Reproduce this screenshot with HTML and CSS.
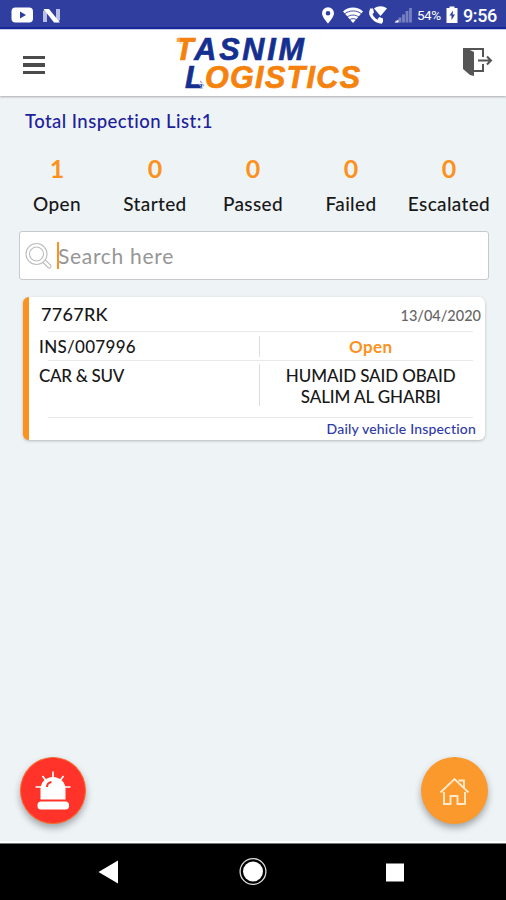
FILE: index.html
```html
<!DOCTYPE html>
<html lang="en">
<head>
<meta charset="utf-8">
<title>Tasnim Logistics</title>
<link rel="stylesheet" href="styles.css">
</head>
<body>
<div class="statusbar">
  <svg class="status-icons" width="70" height="28" viewBox="0 0 70 28">
    <rect x="11.5" y="7.5" width="21.5" height="15" rx="4" fill="#fff"/>
    <path d="M20 11.5v7l6-3.500z" fill="#303f9f"/>
    <path d="M43 22V11l4-2v13zM60 9v11l-4 2.500V9z" fill="#b9bfe2"/>
    <path d="M43.500 9h5.500L60 22.500h-6z" fill="#fff"/>
  </svg>
  <div class="status-right">
    <svg width="94" height="28" viewBox="0 0 94 28">
      <path fill="#fff" fill-rule="evenodd" d="M8 7.300a6 6 0 0 1 6 6c0 4-6 10.200-6 10.200S2 17.300 2 13.300a6 6 0 0 1 6-6zm0 3.700a2.300 2.300 0 1 0 0 4.600 2.300 2.300 0 0 0 0-4.600z"/>
      <path d="M33 23 23 11.500C28 6 38 6 43 11.500z" fill="#fff"/>
      <path d="M24 14.300c5-4.500 13-4.500 18 0M26.700 17.300c4-3 8.600-3 12.600 0M29 20c2.500-1.800 5.500-1.800 8 0" fill="none" stroke="#303f9f" stroke-width=".9"/>
      <path d="M54 8.500c4-3 9-3 13 0L60.500 16z" fill="#fff"/>
      <path d="M51.500 9.500c-3 5 3 12.500 10.500 12.800" fill="none" stroke="#fff" stroke-width="3"/>
      <path d="M50 8.500l3 0 1 4-2 2zM57.500 19l2-2 3.500 1.500v4h-4z" fill="#fff"/>
      <path d="M76.500 22.500v-2M80 22.500v-5M83.500 22.500v-8M87 22.500V11M90.500 22.500V8" stroke="#7680c0" stroke-width="2.800"/>
      <path d="M74.500 22.500h4v-3z" fill="#fff"/>
    </svg>
    <span class="battery-text">54%</span>
    <svg width="12" height="28" viewBox="0 0 12 28"><path d="M.5 8h3V6.500h5V8h3v15H.5z" fill="#fff"/><path d="M7 10.500 3.500 15.500h2V20L9 14.500H6.700z" fill="#303f9f"/></svg>
    <span class="clock">9:56</span>
  </div>
</div>

<header class="header">
  <div class="menu"><i></i><i></i><i></i></div>
  <svg class="logo" width="190" height="62" viewBox="0 0 190 62">
    <text class="logo-text" x="3" y="29" textLength="129" lengthAdjust="spacing"><tspan class="orange">T</tspan><tspan class="blue">ASNIM</tspan></text>
    <text class="logo-text" x="13" y="56.500" textLength="175" lengthAdjust="spacing"><tspan class="blue">L</tspan><tspan class="orange">OGISTICS</tspan></text>
    <path d="M4 8h4M5 10h3M7 12h3" stroke="#f9c48e" stroke-width="1"/>
    <path d="M28 50l2 2M27 53l2 2M30 53l2 2M28 57h3" stroke="#9ba7d1" stroke-width="1.100"/>
  </svg>
  <svg class="exit" width="32" height="32" viewBox="0 0 32 32">
    <path d="M1 2h3l8 4v24l-4-1-7-6z" fill="#555"/>
    <path d="M2 3h19v8M12 25h9v-7" fill="none" stroke="#555" stroke-width="2"/>
    <path d="M16 14.500h12M25 10.500l4 4-4 4" fill="none" stroke="#555" stroke-width="2"/>
  </svg>
</header>

<main class="content">
  <h1 class="title">Total Inspection List:1</h1>
  <div class="stats">
    <div class="stat"><b>1</b><span>Open</span></div>
    <div class="stat"><b>0</b><span>Started</span></div>
    <div class="stat"><b>0</b><span>Passed</span></div>
    <div class="stat"><b>0</b><span>Failed</span></div>
    <div class="stat"><b>0</b><span>Escalated</span></div>
  </div>
  <div class="search">
    <svg width="28" height="30" viewBox="0 0 28 30" fill="none" stroke="#bdbdbd" stroke-width="1.100">
      <circle cx="11.500" cy="13" r="10.500"/><circle cx="11.500" cy="13" r="7"/>
      <path d="M18 21.500l5 5c2 1.500 4-.5 2.500-2.500l-5.300-5.200"/>
    </svg>
    <span class="caret"></span><span class="placeholder">Search here</span>
  </div>
  <article class="card">
    <div class="row row-top"><span class="plate">7767RK</span><span class="date">13/04/2020</span></div>
    <div class="row row-mid"><span class="left inspection">INS/007996</span><span class="right open">Open</span></div>
    <div class="row row-body"><span class="left vehicle">CAR &amp; SUV</span><span class="right driver"><span>HUMAID SAID OBAID</span><span>SALIM AL GHARBI</span></span></div>
    <div class="row row-foot"><span class="type">Daily vehicle Inspection</span></div>
  </article>
  <div class="actions">
    <div class="fab red">
      <svg width="38" height="42" viewBox="0 0 38 42">
        <path d="M6.500 29.500V19a12.500 12 0 0 1 25 0v10.500z" fill="#fff"/>
        <rect x="3.500" y="31.500" width="31.500" height="8" rx="3.500" fill="#fff"/>
        <path d="M19 1.500V8M8.500 6l3 4M29.500 6l-3 4M1.500 17H8M30 17h6.500" stroke="#fff" stroke-width="1.700"/>
        <path d="M13 17c0-3 2-4.500 4.500-5" fill="none" stroke="#ff3329" stroke-width="2"/>
      </svg>
    </div>
    <div class="fab amber">
      <svg width="32" height="32" viewBox="0 0 32 32" fill="none" stroke="#ffe9c9" stroke-width="1.900">
        <path d="M1.500 17.500 15.500 4l14 13.500M19.500 5.500h5.500v7M5 17v12h6.500v-8h7v8h7.500V17"/>
      </svg>
    </div>
  </div>
</main>
<nav class="navbar">
  <svg width="506" height="56" viewBox="0 0 506 56">
    <path d="M98.500 28 118 16.500v23z" fill="#fff"/>
    <circle cx="253" cy="27.500" r="12.900" fill="none" stroke="#ddd" stroke-width="1.300"/>
    <circle cx="253" cy="27.500" r="10" fill="#fff"/>
    <rect x="386" y="19.500" width="18" height="18" fill="#fff"/>
  </svg>
</nav>
</body>
</html>
```
FILE: styles.css
```css
* { box-sizing: border-box; }
body { margin: 0; width: 506px; height: 900px; overflow: hidden; background: #eef3f6; font-family: Lato, "Liberation Sans", sans-serif; font-weight: 500; color: #181818; display: flex; flex-direction: column; }
svg { display: block; flex: none; }
span, h1, text { white-space: nowrap; }

.statusbar { height: 30px; flex: none; background: #303f9f; border-bottom: 1px solid #c9cfed; box-shadow: inset 0 -2px 0 #17299a; display: flex; justify-content: space-between; color: #fff; font-family: Roboto, sans-serif; }
.status-right { display: flex; width: 186px; height: 29px; }
.battery-text { width: 32px; padding-left: 3px; font-size: 13.500px; line-height: 31px; letter-spacing: -.5px; font-weight: 400; }
.clock { font-size: 18px; line-height: 32px; padding-left: 5px; letter-spacing: -.4px; }

.header { height: 66px; flex: none; background: #fff; display: flex; box-shadow: 0 1px 2px #aaa; position: relative; }
.menu { width: 22px; margin: 26px 0 0 23px; display: flex; flex-direction: column; gap: 4px; }
.menu i { height: 3.300px; background: #4b4b4b; }
.logo { margin-left: 127px; margin-top: 1px; }
.logo-text { font: italic 700 30.500px/1 "Liberation Sans", sans-serif; }
.orange { fill: #f5820d; stroke: #f5820d; stroke-width: .7px; }
.blue { fill: #152f91; stroke: #152f91; stroke-width: .7px; }
.exit { margin: 16px 0 0 100px; }

.content { flex: 1; min-height: 0; display: flex; flex-direction: column; }
.title { margin: 12px 0 0 25px; height: 26px; font-size: 18.500px; line-height: 26px; font-weight: 500; color: #20209b; letter-spacing: .45px; }
.stats { display: grid; grid-template-columns: repeat(5, 98px); margin: 18px 0 0 8px; height: 65px; }
.stat { display: flex; flex-direction: column; align-items: center; }
.stat b { font-size: 25px; line-height: 32px; height: 32px; font-weight: 700; color: #fb9220; }
.stat span { font-size: 19px; line-height: 24px; margin-top: 8px; letter-spacing: .35px; }

.search { width: 470px; height: 49px; margin: 14px 0 0 19px; background: #fff; border: 1px solid #c6c9cd; border-radius: 3px; display: flex; align-items: center; padding-left: 5px; }
.caret { width: 2px; height: 27px; margin-left: 4px; background: #fb9220; }
.placeholder { margin-left: -1px; font-size: 21px; line-height: 28px; font-weight: 400; color: #969696; letter-spacing: .7px; }

.card { width: 462px; height: 143px; flex: none; margin: 17px 0 0 23px; background: #fff; border-left: 6px solid #fb9220; border-radius: 6px; box-shadow: 0 1px 3px #b5b9bd; }
.row { display: flex; margin: 0 12px 0 19px; }
.row-top { height: 35px; border-bottom: 1px solid #e9e9e9; justify-content: space-between; }
.row-mid { height: 29px; padding-top: 4px; border-bottom: 1px solid #e9e9e9; }
.row-body { height: 57px; padding-top: 3px; border-bottom: 1px solid #e9e9e9; }
.row-foot { height: 22px; justify-content: flex-end; }
.plate { margin-left: -7px; font-size: 18px; line-height: 35px; letter-spacing: .3px; }
.date { margin-right: -8px; font-size: 14.500px; line-height: 38px; color: #666; letter-spacing: 0; }
.left { width: 221px; margin-left: -9px; font-size: 17px; }
.right { width: 214px; border-left: 1px solid #ddd; text-align: center; font-size: 17px; padding-left: 8px; }
.inspection { line-height: 22px; letter-spacing: .3px; }
.open { color: #fb9220; height: 21px; line-height: 22px; font-weight: 700; letter-spacing: .4px; }
.vehicle { line-height: 24px; letter-spacing: -.3px; }
.driver { height: 42px; display: flex; flex-direction: column; align-items: center; line-height: 20.500px; padding-top: 2px; letter-spacing: -.1px; }
.type { margin-right: -3px; font-size: 14px; line-height: 22px; color: #2e3ba5; letter-spacing: .18px; }

.actions { margin: auto 18px 19px 20px; display: flex; justify-content: space-between; }
.fab { width: 66px; height: 67px; border-radius: 50%; display: flex; align-items: center; justify-content: center; box-shadow: 0 4px 7px #9fa5aa; }
.red { background: #ff3329; border: 1px solid #f96a2c; }
.amber { width: 67px; background: #fc992d; }
.navbar { height: 57px; flex: none; background: #000; border-top: 1px solid #777; box-shadow: 0 -2px 0 #fff; }
```
